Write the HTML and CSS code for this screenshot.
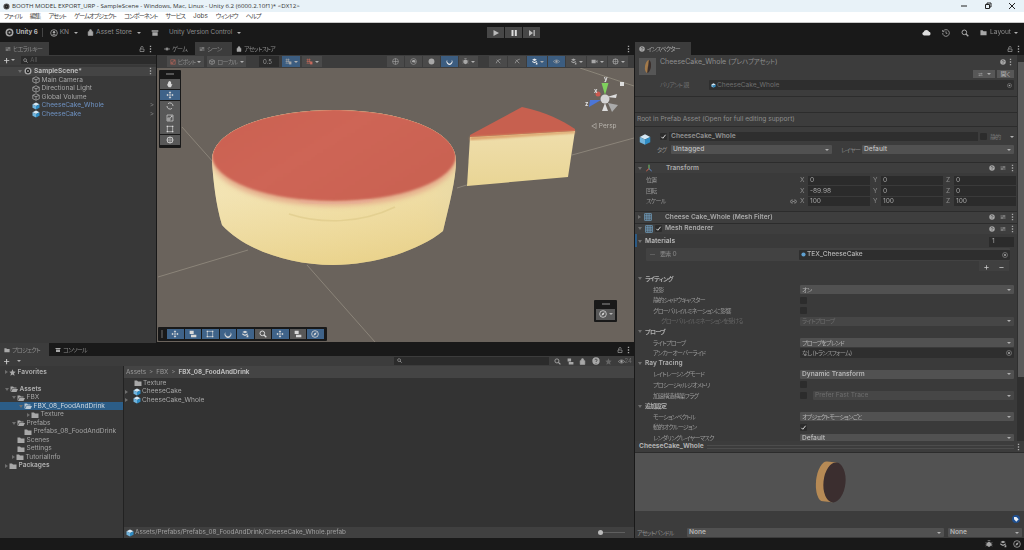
FILE: index.html
```html
<!DOCTYPE html>
<html lang="ja">

<head>
  <meta charset="UTF-8">
  <title>BOOTH MODEL EXPORT_URP - SampleScene - Unity 6.2</title>
  <link rel="stylesheet" href="styles.css">
</head>

<body>
  <svg class="defs" aria-hidden="true">
    <symbol id="i-box" viewBox="0 0 16 16"><path d="M8 1.5 14.5 4.5V11.5L8 14.5 1.5 11.5V4.5ZM1.5 4.5 8 7.5 14.5 4.5M8 7.5V14.5" fill="none" stroke="currentColor" stroke-width="1.5"/></symbol>
    <symbol id="i-prefab" viewBox="0 0 16 16"><path d="M8 1 15 4.5 8 8 1 4.5Z" fill="#d5e8f5"/><path d="M1 4.5 8 8V15L1 11.5Z" fill="#72b4dc"/><path d="M15 4.5 8 8V15L15 11.5Z" fill="#2f8cc4"/></symbol>
    <symbol id="i-folder" viewBox="0 0 16 16"><path d="M1 3H6L8 5H15V14H1Z" fill="currentColor"/></symbol>
    <symbol id="i-open" viewBox="0 0 16 16"><path d="M1 3H6L8 5H13V7H4L1 14Z" fill="currentColor"/><path d="M5 8H16L13 14H2Z" fill="currentColor"/></symbol>
    <symbol id="i-unity" viewBox="0 0 16 16"><circle cx="8" cy="8" r="7" fill="currentColor"/><path d="M8 3 12 5.5V10.500L8 13 4 10.500V5.500Z" fill="#222"/><circle cx="8" cy="8" r="1.800" fill="currentColor"/></symbol>
    <symbol id="i-dots" viewBox="0 0 4 12"><path d="M1 1h2v2H1zM1 5h2v2H1zM1 9h2v2H1z" fill="currentColor"/></symbol>
    <symbol id="i-lock" viewBox="0 0 12 12"><path d="M2 6h8v5H2zM3.500 6V3.500a2.500 2.500 0 0 1 5 0" fill="none" stroke="currentColor" stroke-width="1.300"/></symbol>
    <symbol id="i-help" viewBox="0 0 12 12"><circle cx="6" cy="6" r="5.500" fill="currentColor"/><path d="M4.300 4.700a1.700 1.600 0 1 1 2.500 1.500c-.6.300-.8.500-.8 1.300M6 9v1" fill="none" stroke="#3c3c3c" stroke-width="1.300"/></symbol>
    <symbol id="i-sliders" viewBox="0 0 12 12"><path d="M1 4h10M1 8h10M8 2v4M4 6v4" fill="none" stroke="currentColor" stroke-width="1.300"/></symbol>
    <symbol id="i-search" viewBox="0 0 12 12"><circle cx="5" cy="5" r="3.500" fill="none" stroke="currentColor" stroke-width="1.500"/><path d="M7.500 7.500 11 11" stroke="currentColor" stroke-width="2"/></symbol>
    <symbol id="i-target" viewBox="0 0 12 12"><circle cx="6" cy="6" r="5" fill="none" stroke="currentColor"/><circle cx="6" cy="6" r="2" fill="currentColor"/></symbol>
    <symbol id="i-hand" viewBox="0 0 12 12"><path d="M3 6V3.500h1V6V2h1.200v4V1.500h1.200V6V2.500h1.200V7l1-1.500 1 .6L7.500 11H4L2 8V5.500h1Z" fill="currentColor"/></symbol>
    <symbol id="i-move" viewBox="0 0 12 12"><path d="M6 .5 8 3H4ZM6 11.500 4 9H8ZM.5 6 3 4V8ZM11.500 6 9 8V4ZM5.500 3h1v6h-1ZM3 5.500h6v1H3Z" fill="currentColor"/></symbol>
    <symbol id="i-rotate" viewBox="0 0 12 12"><path d="M3 2.500A4.500 4.500 0 0 1 10.500 6M9 9.500A4.500 4.500 0 0 1 1.500 6" fill="none" stroke="currentColor" stroke-width="1.200"/></symbol>
    <symbol id="i-scale" viewBox="0 0 12 12"><path d="M1.500 1.500h9v9h-9Z" fill="none" stroke="currentColor"/><path d="M3 9h3V6H3ZM6 6l3-3M7 3h2v2" fill="none" stroke="currentColor"/></symbol>
    <symbol id="i-rect" viewBox="0 0 12 12"><path d="M2 2h8v8H2Z" fill="none" stroke="currentColor"/><path d="M1 1h2v2H1zM9 1h2v2H9zM1 9h2v2H1zM9 9h2v2H9z" fill="currentColor"/></symbol>
    <symbol id="i-combo" viewBox="0 0 12 12"><circle cx="6" cy="6" r="4.500" fill="none" stroke="currentColor"/><path d="M6 1V11M1 6H11M2.500 2.500h7v7h-7Z" fill="none" stroke="currentColor" stroke-width=".8"/></symbol>
    <symbol id="i-grid" viewBox="0 0 12 12"><circle cx="6" cy="6" r="5" fill="none" stroke="currentColor"/><path d="M6 1V11M1 6H11" stroke="currentColor"/></symbol>
    <symbol id="i-half" viewBox="0 0 12 12"><circle cx="6" cy="6" r="5" fill="none" stroke="currentColor"/><path d="M3 7A3.500 3.500 0 0 1 9.500 5L9 8Z" fill="currentColor"/></symbol>
    <symbol id="i-ball" viewBox="0 0 12 12"><circle cx="6" cy="6" r="5" fill="currentColor"/></symbol>
    <symbol id="i-ring" viewBox="0 0 12 12"><path d="M2.500 3A5 5 0 1 0 9.500 3 4 4.500 0 1 1 2.500 3Z" fill="currentColor"/></symbol>
    <symbol id="i-bug" viewBox="0 0 12 12"><ellipse cx="6" cy="6.500" rx="3.200" ry="4" fill="currentColor"/><path d="M1 4 11 9M11 4 1 9M1 6.500H11M4 1 8 1" stroke="currentColor"/></symbol>
    <symbol id="i-x-light" viewBox="0 0 12 12"><path d="M2 9c2-5 4-6 8-7M3 3l6 6" fill="none" stroke="currentColor" stroke-width="1.200"/></symbol>
    <symbol id="i-layers" viewBox="0 0 12 12"><path d="M6 1 10 3 6 5 2 3ZM2 5l4 2 4-2v2L6 9 2 7ZM9 8h2v3H8" fill="currentColor"/></symbol>
    <symbol id="i-eye" viewBox="0 0 12 12"><path d="M.5 6Q6 .5 11.500 6 6 11.500.5 6Z" fill="none" stroke="currentColor"/><circle cx="6" cy="6" r="2" fill="currentColor"/></symbol>
    <symbol id="i-cam" viewBox="0 0 12 12"><path d="M1 3h7v6H1ZM9 5l2-1.500v5L9 7Z" fill="currentColor"/></symbol>
    <symbol id="i-snap" viewBox="0 0 12 12"><path d="M1 3h7M1 6h7M1 9h7M3 1v7M6 1v7" stroke="currentColor"/><path d="M7 6h4v5H7Z" fill="currentColor"/></symbol>
    <symbol id="i-bag" viewBox="0 0 12 12"><path d="M2 4.500h8V11H2ZM4 4.500V3a2 2 0 0 1 4 0v1.500" fill="currentColor" stroke="currentColor"/></symbol>
    <symbol id="i-user" viewBox="0 0 12 12"><circle cx="6" cy="6" r="5" fill="none" stroke="currentColor" stroke-width="1.200"/><circle cx="6" cy="4.800" r="1.800" fill="currentColor"/><path d="M2.800 9.500c1-2 5.400-2 6.400 0" fill="currentColor"/></symbol>
    <symbol id="i-store" viewBox="0 0 12 12"><path d="M1 2h10v2H1ZM2 5h8v5H2Z" fill="currentColor"/></symbol>
    <symbol id="i-cloud" viewBox="0 0 14 10"><path d="M3 9.500a2.700 2.700 0 0 1-.5-5.300A4.500 4.500 0 0 1 11 4a2.800 2.800 0 0 1 0 5.500Z" fill="currentColor"/></symbol>
    <symbol id="i-history" viewBox="0 0 12 12"><path d="M2 3A5 5 0 1 1 1 6M1 1.500V4H3.500M6 3.500V6.500H8" fill="none" stroke="currentColor" stroke-width="1.200"/></symbol>
    <symbol id="i-mesh" viewBox="0 0 12 12"><path d="M1 1h10v10H1ZM1 4.300h10M1 7.600h10M4.300 1v10M7.600 1v10" fill="none" stroke="#7fb7de"/></symbol>
    <symbol id="i-axes" viewBox="0 0 12 12"><path d="M6 1V7" stroke="#7bc66b" stroke-width="1.500"/><path d="M6 7 2 10.500" stroke="#d9654f" stroke-width="1.500"/><path d="M6 7 10 10.500" stroke="#5d8fd6" stroke-width="1.500"/></symbol>
    <symbol id="i-tag" viewBox="0 0 12 12"><circle cx="6" cy="6" r="6" fill="#1f4f8f"/><path d="M3 3h3.500L10 6.500 6.500 10 3 6.500Z" fill="#e8eef5"/></symbol>
    <symbol id="i-star" viewBox="0 0 12 12"><path d="M6 .5 7.700 4.300 11.500 4.700 8.600 7.300 9.500 11.500 6 9.300 2.500 11.500 3.400 7.300.5 4.700 4.300 4.300Z" fill="currentColor"/></symbol>
    <symbol id="i-check" viewBox="0 0 10 10"><path d="M2 5.500 4 7.500 8 2.500" fill="none" stroke="currentColor" stroke-width="1.400"/></symbol>
    <symbol id="i-tool" viewBox="0 0 12 12"><path d="M1 1h6v5H1ZM3 7h8v4H3Z" fill="currentColor"/></symbol>
    <symbol id="i-compass" viewBox="0 0 12 12"><circle cx="6" cy="6" r="5" fill="none" stroke="currentColor" stroke-width="1.200"/><path d="M8.500 3.500 7 7 3.500 8.500 5 5Z" fill="currentColor"/></symbol>
    <symbol id="i-link" viewBox="0 0 12 12"><path d="M5 3.500H3.500a2.500 2.500 0 0 0 0 5H5M7 3.500h1.500a2.500 2.500 0 0 1 0 5H7M4 6h4" fill="none" stroke="currentColor" stroke-width="1.200"/></symbol>
  </svg>

  <header class="titlebar">
    <svg class="ic title-icon"><use href="#i-unity"/></svg>
    <span>BOOTH MODEL EXPORT_URP - SampleScene - Windows, Mac, Linux - Unity 6.2 (6000.2.10f1)* &lt;DX12&gt;</span>
    <div class="winbtns">
      <svg width="8" height="8" viewBox="0 0 8 8"><path d="M1 4H7" stroke="#222"/></svg>
      <svg width="8" height="8" viewBox="0 0 8 8"><path d="M1.500 2.500h4v4h-4ZM3 2.500V1h4v4H5.500" fill="none" stroke="#222"/></svg>
      <svg width="8" height="8" viewBox="0 0 8 8"><path d="M1 1 7 7M7 1 1 7" stroke="#222"/></svg>
    </div>
  </header>

  <nav class="menubar">
    <span class="jp">ファイル</span><span class="jp">編集</span><span class="jp">アセット</span><span class="jp">ゲームオブジェクト</span><span class="jp">コンポーネント</span><span class="jp">サービス</span><span>Jobs</span><span class="jp">ウィンドウ</span><span class="jp">ヘルプ</span>
  </nav>

  <div class="toolbar">
    <svg class="ic ic9 mr2"><use href="#i-unity"/></svg><b class="unity">Unity 6</b>
    <i class="vline"></i>
    <svg class="ic ic8 mr2"><use href="#i-user"/></svg><span>KN</span><i class="caret ml5"></i>
    <svg class="ic ic7 ml9 mr2"><use href="#i-bag"/></svg><span>Asset Store</span><i class="caret ml5"></i>
    <svg class="ic ic8 ml10"><use href="#i-store"/></svg>
    <span class="uvc">Unity Version Control</span><i class="caret ml5"></i>
    <div class="play">
      <button><svg width="8" height="8" viewBox="0 0 8 8"><path d="M1.500 1 7 4 1.500 7Z" fill="#bbb"/></svg></button>
      <button><svg width="8" height="8" viewBox="0 0 8 8"><path d="M1.500 1h2v6h-2ZM4.800 1h2v6h-2Z" fill="#ddd"/></svg></button>
      <button><svg width="8" height="8" viewBox="0 0 8 8"><path d="M1 1 5 4 1 7ZM5.500 1h1.300v6H5.500Z" fill="#bbb"/></svg></button>
    </div>
    <div class="toolbar-right">
      <svg class="ic cloud"><use href="#i-cloud"/></svg>
      <svg class="ic ic8"><use href="#i-history"/></svg>
      <svg class="ic ic8"><use href="#i-search"/></svg>
      <div class="layout"><svg class="ic ic7"><use href="#i-folder"/></svg><span>Layout</span><i class="caret"></i></div>
    </div>
  </div>

  <main class="workspace">
    <div class="left">
      <div class="top-row">
        <section class="hierarchy">
          <div class="tabs">
            <div class="tab active tab-hier"><svg class="ic ic6"><use href="#i-sliders"/></svg><span class="jp">ヒエラルキー</span></div>
            <div class="tab-tools"><svg class="ic ic6"><use href="#i-lock"/></svg><svg class="ic dots"><use href="#i-dots"/></svg></div>
          </div>
          <div class="hier-bar">
            <span class="plus">+</span><i class="caret"></i>
            <div class="hier-search"><svg class="ic ic5"><use href="#i-search"/></svg>All</div>
          </div>
          <div class="hier-list">
            <div class="hier-scene"><i class="tri-d"></i><svg class="ic ic8"><use href="#i-unity"/></svg><b>SampleScene*</b><svg class="ic dots push"><use href="#i-dots"/></svg></div>
            <div class="hier-row"><svg class="ic ic8"><use href="#i-box"/></svg>Main Camera</div>
            <div class="hier-row"><svg class="ic ic8"><use href="#i-box"/></svg>Directional Light</div>
            <div class="hier-row"><svg class="ic ic8"><use href="#i-box"/></svg>Global Volume</div>
            <div class="hier-row prefab"><svg class="ic ic8"><use href="#i-prefab"/></svg>CheeseCake_Whole<span class="chev">&gt;</span></div>
            <div class="hier-row prefab"><svg class="ic ic8"><use href="#i-prefab"/></svg>CheeseCake<span class="chev">&gt;</span></div>
          </div>
        </section>

        <section class="scene">
          <div class="tabs">
            <div class="tab tab-game"><svg class="ic ic6"><use href="#i-eye"/></svg><span class="jp">ゲーム</span></div>
            <div class="tab active tab-scene"><svg class="ic ic6"><use href="#i-sliders"/></svg><span class="jp">シーン</span></div>
            <div class="tab tab-store"><svg class="ic ic6"><use href="#i-bag"/></svg><span class="jp">アセットストア</span></div>
            <div class="tab-tools"><svg class="ic dots"><use href="#i-dots"/></svg></div>
          </div>
          <div class="scene-bar">
            <div class="sbtn pivot"><svg class="ic ic6 red"><use href="#i-scale"/></svg><span class="jp">ピボット</span><i class="caret"></i></div>
            <div class="sbtn local"><svg class="ic ic6"><use href="#i-box"/></svg><span class="jp">ローカル</span><i class="caret"></i></div>
            <div class="snap-val">0.5</div>
            <div class="sbtn blue snap1"><svg class="ic ic7"><use href="#i-snap"/></svg><i class="caret"></i></div>
            <div class="sbtn snap2"><svg class="ic ic7 red"><use href="#i-snap"/></svg><i class="caret"></i></div>
            <div class="bar-group group-a">
              <div class="sbtn w17"><svg class="ic ic7"><use href="#i-grid"/></svg></div>
              <div class="sbtn w17"><svg class="ic ic7"><use href="#i-half"/></svg></div>
              <div class="sbtn w17"><svg class="ic ic7"><use href="#i-ball"/></svg></div>
              <div class="sbtn w17 blue"><svg class="ic ic7 white"><use href="#i-ring"/></svg></div>
              <div class="sbtn w19"><svg class="ic ic7"><use href="#i-bug"/></svg><i class="caret"></i></div>
            </div>
            <div class="bar-group group-b">
              <div class="sbtn w18"><svg class="ic ic7"><use href="#i-x-light"/></svg></div>
              <div class="sbtn w18"><svg class="ic ic7"><use href="#i-x-light"/></svg></div>
              <div class="sbtn w20 blue"><svg class="ic ic7 white"><use href="#i-layers"/></svg><i class="caret"></i></div>
              <div class="sbtn w17 blue"><svg class="ic ic7"><use href="#i-eye"/></svg></div>
              <div class="sbtn w20"><svg class="ic ic7"><use href="#i-layers"/></svg><i class="caret"></i></div>
              <div class="sbtn w20"><svg class="ic ic7"><use href="#i-cam"/></svg><i class="caret"></i></div>
              <div class="sbtn w20"><svg class="ic ic7"><use href="#i-combo"/></svg><i class="caret"></i></div>
            </div>
          </div>
          <div class="viewport">
            <svg class="scene-art" viewBox="157 68 477 274" width="477" height="274">
              <defs>
                <linearGradient id="side" x1="0" x2="1" y1="0" y2="0">
                  <stop offset="0" stop-color="#f0e1af"/>
                  <stop offset=".5" stop-color="#eedb9d"/>
                  <stop offset=".85" stop-color="#e9d38f"/>
                  <stop offset="1" stop-color="#dccb92"/>
                </linearGradient>
                <linearGradient id="side-shade" x1="0" x2="0" y1="0" y2="1">
                  <stop offset=".55" stop-color="#f5e6b8" stop-opacity=".5"/>
                  <stop offset="1" stop-color="#e6cc7e" stop-opacity=".6"/>
                </linearGradient>
                <linearGradient id="top" x1="0" x2="1" y1="0" y2=".6">
                  <stop offset="0" stop-color="#cb6151"/>
                  <stop offset=".5" stop-color="#ce6556"/>
                  <stop offset="1" stop-color="#ca6252"/>
                </linearGradient>
                <linearGradient id="slice-side" x1="0" x2="0" y1="0" y2="1">
                  <stop offset="0" stop-color="#efdeac"/>
                  <stop offset="1" stop-color="#e9d595"/>
                </linearGradient>
                <filter id="soft" x="-5%" y="-5%" width="110%" height="110%" color-interpolation-filters="sRGB"><feGaussianBlur stdDeviation="1"/></filter>
                <filter id="softer" x="-10%" y="-10%" width="120%" height="120%" color-interpolation-filters="sRGB"><feGaussianBlur stdDeviation="2.500"/></filter>
                <clipPath id="cake-clip"><path d="M212 160C213 180 216 205 222 225C245 250 290 265 333 265C375 265 420 250 443 231C449 205 456 180 456 160C456 130 400 110 334 110C268 110 212 130 212 160Z"/></clipPath>
              </defs>
              <path d="M182 127 214 163M158 277 248 250M307 265 375 342M457 188 470 184M572 155 634 138M580 68 634 86" stroke="#8b8479" fill="none"/>
              <g clip-path="url(#cake-clip)">
                <rect x="205" y="105" width="258" height="165" fill="url(#side)"/>
                <rect x="205" y="105" width="258" height="165" fill="url(#side-shade)"/>
                <path d="M289 214C320 224 360 224 395 207" fill="none" stroke="#dcc887" stroke-width="1.500" opacity=".6"/>
                <ellipse cx="334" cy="160" rx="122" ry="46" fill="#e5ad8c" filter="url(#softer)"/>
                <ellipse cx="334" cy="155" rx="122" ry="46" fill="url(#top)" filter="url(#soft)"/>
                <path d="M300 201C320 204 350 204 372 200" fill="none" stroke="#e8a898" stroke-width="1.500" filter="url(#soft)"/>
              </g>
              <path d="M470 137 575 131 568 177 467 186Z" fill="url(#slice-side)"/>
              <path d="M470 135 522 107C545 112 562 120 575 129L575 131 470 137Z" fill="#c7604f"/>
              <path d="M470 137 575 131 575 133 470 140Z" fill="#d99a63" filter="url(#soft)"/>
              <g transform="translate(605 99)">
                <path d="M-3.500 -16H3.500L0 -4Z" fill="#7fd15d"/>
                <path d="M-16 8-15 1-4 1Z" fill="#4b76d8"/>
                <circle cx="-7" cy="-5" r="2.500" fill="#cc5a50"/>
                <path d="M12-5 11-1 2-2Z" fill="#ddd"/>
                <path d="M-3 12 3 12 0 4Z" fill="#ddd"/>
                <path d="M3 4 13 6 7 13Z" fill="#aaa"/>
                <circle cx="0" cy="0" r="4.500" fill="#d4d4d4"/>
              </g>
              <path d="M620 82h4v4h-4Z" fill="#ddd"/>
            </svg>
            <span class="giz giz-y">y</span><span class="giz giz-x">x</span><span class="giz giz-z">z</span>
            <span class="persp">◁ Persp</span>

            <div class="overlay tools">
              <i class="grip"></i>
              <div class="obtn"><svg class="ic ic8"><use href="#i-hand"/></svg></div>
              <div class="obtn blue"><svg class="ic ic8"><use href="#i-move"/></svg></div>
              <div class="obtn"><svg class="ic ic8"><use href="#i-rotate"/></svg></div>
              <div class="obtn"><svg class="ic ic8"><use href="#i-scale"/></svg></div>
              <div class="obtn"><svg class="ic ic8"><use href="#i-rect"/></svg></div>
              <div class="obtn"><svg class="ic ic8"><use href="#i-combo"/></svg></div>
            </div>

            <div class="overlay cam-mode">
              <i class="grip"></i>
              <div class="obtn"><svg class="ic ic8"><use href="#i-compass"/></svg><i class="caret"></i></div>
            </div>

            <div class="overlay dock">
              <i class="dock-grip"></i>
              <div class="obtn blue"><svg class="ic ic8"><use href="#i-move"/></svg></div>
              <div class="obtn blue"><svg class="ic ic8"><use href="#i-tool"/></svg></div>
              <div class="obtn blue"><svg class="ic ic8"><use href="#i-rect"/></svg></div>
              <div class="obtn blue"><svg class="ic ic8"><use href="#i-ring"/></svg></div>
              <div class="obtn blue"><svg class="ic ic8"><use href="#i-layers"/></svg></div>
              <div class="obtn"><svg class="ic ic8"><use href="#i-search"/></svg></div>
              <div class="obtn blue"><svg class="ic ic8"><use href="#i-move"/></svg></div>
              <div class="obtn"><svg class="ic ic8"><use href="#i-tool"/></svg></div>
              <div class="obtn blue"><svg class="ic ic8"><use href="#i-compass"/></svg></div>
            </div>
          </div>
        </section>
      </div>

      <section class="project">
        <div class="tabs">
          <div class="tab active tab-proj"><svg class="ic ic6"><use href="#i-folder"/></svg><span class="jp">プロジェクト</span></div>
          <div class="tab tab-console"><svg class="ic ic6"><use href="#i-store"/></svg><span class="jp">コンソール</span></div>
          <div class="tab-tools"><svg class="ic ic6"><use href="#i-lock"/></svg><svg class="ic dots"><use href="#i-dots"/></svg></div>
        </div>
        <div class="proj-bar">
          <span class="plus">+</span><i class="caret"></i>
          <div class="proj-search"><svg class="ic ic5"><use href="#i-search"/></svg></div>
          <svg class="ic ic7"><use href="#i-search"/></svg>
          <svg class="ic ic7"><use href="#i-tool"/></svg>
          <svg class="ic ic7"><use href="#i-bag"/></svg>
          <svg class="ic ic8"><use href="#i-help"/></svg>
          <svg class="ic ic7 dim"><use href="#i-star"/></svg>
          <span class="count"><svg class="ic ic7"><use href="#i-eye"/></svg>24</span>
        </div>
        <div class="proj-body">
          <div class="tree">
            <div class="node l0 strong"><i class="tri-r"></i><svg class="ic ic7"><use href="#i-star"/></svg>Favorites</div>
            <div class="node"></div>
            <div class="node l0 strong"><i class="tri-d"></i><svg class="ic ic8"><use href="#i-open"/></svg>Assets</div>
            <div class="node l1"><i class="tri-d"></i><svg class="ic ic8"><use href="#i-open"/></svg>FBX</div>
            <div class="node l2 sel"><i class="tri-d"></i><svg class="ic ic8"><use href="#i-open"/></svg>FBX_08_FoodAndDrink</div>
            <div class="node l3"><i class="tri-r"></i><svg class="ic ic8"><use href="#i-folder"/></svg>Texture</div>
            <div class="node l1"><i class="tri-d"></i><svg class="ic ic8"><use href="#i-open"/></svg>Prefabs</div>
            <div class="node l2"><i class="tri-none"></i><svg class="ic ic8"><use href="#i-folder"/></svg>Prefabs_08_FoodAndDrink</div>
            <div class="node l1"><i class="tri-none"></i><svg class="ic ic8"><use href="#i-folder"/></svg>Scenes</div>
            <div class="node l1"><i class="tri-none"></i><svg class="ic ic8"><use href="#i-folder"/></svg>Settings</div>
            <div class="node l1"><i class="tri-r"></i><svg class="ic ic8"><use href="#i-folder"/></svg>TutorialInfo</div>
            <div class="node l0 strong"><i class="tri-r"></i><svg class="ic ic8"><use href="#i-folder"/></svg>Packages</div>
          </div>
          <div class="files">
            <div class="crumbs">Assets<span>&gt;</span>FBX<span>&gt;</span><b>FBX_08_FoodAndDrink</b></div>
            <div class="file-list">
              <div class="file"><i class="tri-none"></i><svg class="ic ic8"><use href="#i-folder"/></svg>Texture</div>
              <div class="file"><i class="tri-r"></i><svg class="ic ic8"><use href="#i-prefab"/></svg>CheeseCake</div>
              <div class="file"><i class="tri-r"></i><svg class="ic ic8"><use href="#i-prefab"/></svg>CheeseCake_Whole</div>
            </div>
            <div class="pathbar">
              <svg class="ic ic8"><use href="#i-prefab"/></svg>Assets/Prefabs/Prefabs_08_FoodAndDrink/CheeseCake_Whole.prefab
              <div class="slider"><i></i></div>
            </div>
          </div>
        </div>
      </section>
    </div>

    <aside class="inspector">
      <div class="tabs">
        <div class="tab active tab-insp"><svg class="ic ic6"><use href="#i-help"/></svg><span class="jp">インスペクター</span></div>
        <div class="tab-tools"><svg class="ic ic6"><use href="#i-lock"/></svg><svg class="ic dots"><use href="#i-dots"/></svg></div>
      </div>
      <div class="insp-scroll">
        <div class="insp-content">
          <div class="asset-head">
            <div class="asset-thumb"><i></i></div>
            <div class="asset-info">
              <div class="asset-title"><span>CheeseCake_Whole (<span class="jp">プレハブアセット</span>)</span><svg class="ic ic6 push"><use href="#i-help"/></svg><svg class="ic dots"><use href="#i-dots"/></svg></div>
              <div class="asset-btns"><span class="mini"><svg class="ic ic5"><use href="#i-sliders"/></svg><i class="caret"></i></span><span class="mini open">開く</span></div>
              <div class="asset-variant"><span class="jp">バリアント 親</span><div class="field"><svg class="ic ic5"><use href="#i-prefab"/></svg>CheeseCake_Whole<svg class="ic ic5 push"><use href="#i-target"/></svg></div></div>
            </div>
          </div>
          <div class="band"></div>
          <div class="root-note">Root in Prefab Asset (Open for full editing support)</div>

          <div class="object">
            <svg class="ic obj-icon"><use href="#i-prefab"/></svg>
            <div class="obj-rows">
              <div class="obj-name">
                <span class="check on"><svg class="ic"><use href="#i-check"/></svg></span>
                <div class="name-field">CheeseCake_Whole</div>
                <span class="check"></span><span class="static jp">静的</span><i class="caret push"></i>
              </div>
              <div class="obj-tags">
                <span class="tag-label jp">タグ</span><div class="drop tag-drop">Untagged<i class="caret"></i></div>
                <span class="layer-label jp">レイヤー</span><div class="drop">Default<i class="caret"></i></div>
              </div>
            </div>
          </div>

          <div class="comp"><i class="tri-d"></i><svg class="ic ic8"><use href="#i-axes"/></svg><b class="comp-name">Transform</b><div class="comp-tools"><svg class="ic ic6"><use href="#i-help"/></svg><svg class="ic ic6"><use href="#i-sliders"/></svg><svg class="ic dots"><use href="#i-dots"/></svg></div></div>
          <div class="xform">
            <div class="xrow"><span class="xlabel jp">位置</span><span class="ax">X</span><span class="num">0</span><span class="ax">Y</span><span class="num">0</span><span class="ax">Z</span><span class="num">0</span></div>
            <div class="xrow"><span class="xlabel jp">回転</span><span class="ax">X</span><span class="num">-89.98</span><span class="ax">Y</span><span class="num">0</span><span class="ax">Z</span><span class="num">0</span></div>
            <div class="xrow"><span class="xlabel jp">スケール<svg class="ic ic7 push"><use href="#i-link"/></svg></span><span class="ax">X</span><span class="num">100</span><span class="ax">Y</span><span class="num">100</span><span class="ax">Z</span><span class="num">100</span></div>
          </div>
          <div class="comp tall"><i class="tri-r"></i><svg class="ic ic8"><use href="#i-mesh"/></svg><b class="comp-name">Cheese Cake_Whole (Mesh Filter)</b><div class="comp-tools"><svg class="ic ic6"><use href="#i-help"/></svg><svg class="ic ic6"><use href="#i-sliders"/></svg><svg class="ic dots"><use href="#i-dots"/></svg></div></div>
          <div class="comp tall"><i class="tri-d"></i><svg class="ic ic8"><use href="#i-mesh"/></svg><span class="check on"><svg class="ic"><use href="#i-check"/></svg></span><b class="comp-name close">Mesh Renderer</b><div class="comp-tools"><svg class="ic ic6"><use href="#i-help"/></svg><svg class="ic ic6"><use href="#i-sliders"/></svg><svg class="ic dots"><use href="#i-dots"/></svg></div></div>

          <div class="materials"><i class="tri-d"></i><b>Materials</b><span class="count-field">1</span></div>
          <div class="element"><i class="drag"></i><span class="el-label"><span class="jp">要素</span> 0</span><div class="field mat-field"><svg class="ic ic5"><use href="#i-ball"/></svg>TEX_CheeseCake<svg class="ic ic6 push"><use href="#i-target"/></svg></div></div>
          <div class="plusminus"><div><span>+</span><span>−</span></div></div>

          <div class="section"><i class="tri-d"></i><b class="jp">ライティング</b></div>
          <div class="prop"><span class="jp">投影</span><div class="drop"><span class="jp">オン</span><i class="caret"></i></div></div>
          <div class="prop"><span class="jp">静的シャドウキャスター</span><span class="check"></span></div>
          <div class="prop"><span class="jp">グローバルイルミネーションに影響</span><span class="check"></span></div>
          <div class="prop off sub"><span class="jp">グローバルイルミネーションを受ける</span><div class="drop"><span class="jp">ライトプローブ</span><i class="caret"></i></div></div>
          <div class="section"><i class="tri-d"></i><b class="jp">プローブ</b></div>
          <div class="prop"><span class="jp">ライトプローブ</span><div class="drop"><span class="jp">プローブをブレンド</span><i class="caret"></i></div></div>
          <div class="prop"><span class="jp">アンカーオーバーライド</span><div class="field"><span class="jp">なし (トランスフォーム)</span><svg class="ic ic6 push"><use href="#i-target"/></svg></div></div>
          <div class="section"><i class="tri-d"></i><b>Ray Tracing</b></div>
          <div class="prop"><span class="jp">レイトレーシングモード</span><div class="drop bold">Dynamic Transform<i class="caret"></i></div></div>
          <div class="prop"><span class="jp">プロシージャルジオメトリ</span><span class="check"></span></div>
          <div class="prop"><span class="jp">加速構造構築フラグ</span><div class="flagged"><span class="check"></span><div class="drop dimmed">Prefer Fast Trace<i class="caret"></i></div></div></div>
          <div class="section"><i class="tri-d"></i><b class="jp">追加設定</b></div>
          <div class="prop"><span class="jp">モーションベクトル</span><div class="drop"><span class="jp">オブジェクトモーションごと</span><i class="caret"></i></div></div>
          <div class="prop"><span class="jp">動的オクルージョン</span><span class="check on"><svg class="ic"><use href="#i-check"/></svg></span></div>
          <div class="prop"><span class="jp">レンダリングレイヤーマスク</span><div class="drop bold">Default<i class="caret"></i></div></div>
        </div>
        <div class="scrollbar"><i></i></div>
      </div>

      <div class="preview-head"><b>CheeseCake_Whole</b><span class="rule"></span><svg class="ic dots"><use href="#i-dots"/></svg></div>
      <div class="preview">
        <svg width="40" height="46" viewBox="0 0 40 46">
          <g transform="rotate(6 20 23)">
            <path d="M15 3A9 20 0 0 0 15 43H24.500V3Z" fill="#b68a55"/>
            <ellipse cx="24.500" cy="23" rx="11" ry="20" fill="#3b2e2f"/>
          </g>
        </svg>
      </div>
      <div class="bundle-gap"><svg class="ic ic8"><use href="#i-tag"/></svg></div>
      <div class="bundle"><span class="jp">アセットバンドル</span><div class="drop main-drop bold">None<i class="caret"></i></div><div class="drop side-drop bold">None<i class="caret"></i></div></div>
    </aside>
  </main>

  <footer class="statusbar">
    <svg class="ic ic8"><use href="#i-bug"/></svg>
    <svg class="ic ic8"><use href="#i-layers"/></svg>
    <svg class="ic ic8"><use href="#i-compass"/></svg>
  </footer>
</body>

</html>
```

FILE: styles.css
```css
* {
  box-sizing: border-box;
}

html,
body {
  margin: 0;
  height: 100%;
}

body {
  width: 1024px;
  height: 550px;
  overflow: hidden;
  display: flex;
  flex-direction: column;
  background: #191919;
  color: #a8a8a8;
  font-family: Inter, "Noto Sans CJK JP", sans-serif;
  font-size: 6.6px;
  font-feature-settings: "palt";
  line-height: 1;
  white-space: nowrap;
  filter: blur(.35px);
}

i {
  display: block;
  font-style: normal;
}

/* kana in the reference is set much tighter than Noto gives by default */
.jp {
  font-size: 6px;
  letter-spacing: -.7px;
}

.defs {
  position: absolute;
  width: 0;
  height: 0;
}

.ic {
  display: block;
  flex: none;
  width: 8px;
  height: 8px;
  color: #a8a8a8;
}

.ic5 { width: 5px; height: 5px; }
.ic6 { width: 6px; height: 6px; }
.ic7 { width: 7px; height: 7px; }
.ic8 { width: 8px; height: 8px; }
.ic9 { width: 9px; height: 9px; }
.red { color: #c96a5c; }
.white { color: #eee; }
.dim { color: #666; }
.mr2 { margin-right: 2px; }
.ml5 { margin-left: 5px; }
.ml9 { margin-left: 9px; }
.ml10 { margin-left: 10px; }
.push { margin-left: auto; }

.dots {
  width: 3px;
  height: 8px;
}

.caret {
  flex: none;
  width: 0;
  height: 0;
  border: 2px solid transparent;
  border-top: 2.5px solid #b0b0b0;
  border-bottom: 0;
}

.tri-d,
.tri-r,
.tri-none {
  flex: none;
  width: 0;
  height: 0;
  border-style: solid;
  border-color: transparent;
}

.tri-d {
  border-width: 3px 2px 0;
  border-top-color: #6f6f6f;
}

.tri-r {
  border-width: 2px 0 2px 3px;
  border-left-color: #6f6f6f;
}

.tri-none {
  border-width: 0 2px;
}

/* window chrome */
.titlebar {
  flex: none;
  height: 12px;
  display: flex;
  align-items: center;
  padding-left: 3px;
  background: #e8f2f8;
  color: #333;
  font-family: "Open Sans", "Noto Sans CJK JP", sans-serif;
  font-size: 6.15px;
}

.title-icon {
  width: 7px;
  height: 7px;
  margin-right: 2px;
  color: #555;
}

.winbtns {
  margin-left: auto;
  display: flex;
  gap: 16px;
  padding-right: 8px;
}

.menubar {
  flex: none;
  height: 11px;
  display: flex;
  align-items: center;
  gap: 8px;
  padding: 0 0 1px 4px;
  background: #fff;
  border-bottom: 1px solid #c9c9c9;
  color: #444;
  font-size: 6.4px;
}

.menubar .jp {
  font-size: 6.2px;
  letter-spacing: -.9px;
}

.toolbar {
  flex: none;
  height: 19px;
  display: flex;
  align-items: center;
  padding-left: 5px;
  background: #191919;
  color: #8f8f8f;
  font-size: 6.6px;
}

.unity {
  color: #b9b9b9;
  font-size: 6.2px;
}

.vline {
  width: 1px;
  height: 9px;
  margin: 0 7px 0 4px;
  background: #444;
}

.uvc {
  margin-left: 10px;
  font-size: 6.3px;
}

.play {
  position: absolute;
  left: 487px;
  top: 27px;
  display: flex;
  gap: 1px;
}

.play button {
  width: 17px;
  height: 11px;
  padding: 0;
  border: 0;
  background: #474747;
  display: flex;
  align-items: center;
  justify-content: center;
}

.toolbar-right {
  margin-left: auto;
  display: flex;
  align-items: center;
  gap: 11px;
  padding-right: 6px;
}

.cloud {
  width: 9px;
  height: 7px;
  color: #ddd;
}

.layout {
  display: flex;
  align-items: center;
  gap: 3px;
}

.workspace {
  flex: none;
  height: 496px;
  display: flex;
}

.left {
  width: 634px;
  display: flex;
  flex-direction: column;
}

.top-row {
  flex: none;
  height: 301px;
  display: flex;
  gap: 1px;
}

/* tabs */
.tabs {
  flex: none;
  height: 13px;
  display: flex;
  background: #191919;
}

.tab {
  display: flex;
  align-items: center;
  gap: 2px;
  height: 13px;
  color: #8c8c8c;
}

.tab.active {
  background: #3c3c3c;
}

.tab-hier { width: 49px; padding-left: 5px; }
.tab-game { width: 34px; margin-left: 4px; padding-left: 3px; }
.tab-scene { width: 37px; padding-left: 4px; }
.tab-store { width: 50px; padding-left: 4px; }
.tab-proj { width: 49px; padding-left: 4px; }
.tab-console { width: 42px; padding-left: 6px; }
.tab-insp { width: 56px; padding-left: 4px; color: #aaa; }

.tab-tools {
  margin-left: auto;
  display: flex;
  align-items: center;
  gap: 4px;
  padding-right: 4px;
}

.plus {
  color: #d0d0d0;
  font-size: 11px;
  line-height: 9px;
  margin-right: 1px;
}

/* hierarchy */
.hierarchy {
  width: 156px;
  display: flex;
  flex-direction: column;
}

.hier-bar {
  flex: none;
  height: 10px;
  display: flex;
  align-items: center;
  padding-left: 3px;
  background: #3c3c3c;
}

.hier-search {
  flex: 1;
  height: 8px;
  margin-left: 6px;
  display: flex;
  align-items: center;
  gap: 2px;
  padding-left: 2px;
  background: #2b2b2b;
  color: #5f5f5f;
  font-size: 6px;
}

.hier-list {
  flex: 1;
  background: #383838;
  padding-top: 1.500px;
}

.hier-scene {
  height: 9.500px;
  display: flex;
  align-items: center;
  padding: 0 4px 0 18px;
  background: #444;
  color: #b8b8b8;
  gap: 2px;
}

.hier-row {
  height: 8.500px;
  display: flex;
  align-items: center;
  gap: 1.500px;
  padding-left: 32px;
  color: #a8a8a8;
}

.hier-row.prefab {
  color: #6f93c4;
}

.chev {
  margin-left: auto;
  padding-right: 2px;
  color: #777;
}

/* scene view */
.scene {
  flex: 1;
  display: flex;
  flex-direction: column;
}

.scene-bar {
  flex: none;
  height: 13px;
  display: flex;
  align-items: center;
  background: #3c3c3c;
  font-size: 6px;
  color: #8a8a8a;
}

.sbtn {
  height: 11px;
  display: flex;
  align-items: center;
  justify-content: center;
  gap: 2px;
  background: #4a4a4a;
  flex: none;
}

.sbtn.blue {
  background: #3c5d80;
}

.pivot { width: 37px; margin-left: 10px; }
.local { width: 39px; margin-left: 3px; }
.snap-val {
  width: 20px;
  height: 11px;
  margin-left: 13px;
  padding: 3px 0 0 4px;
  background: #2b2b2b;
  color: #999;
}
.snap1 { width: 18px; margin-left: 3px; }
.snap2 { width: 20px; margin-left: 2px; }
.w17 { width: 17px; }
.w18 { width: 18px; }
.w19 { width: 19px; }
.w20 { width: 20px; }

.bar-group {
  display: flex;
  gap: 1px;
}

.group-a { margin-left: 65px; }
.group-b { margin-left: 11px; }

.viewport {
  position: relative;
  flex: none;
  height: 274px;
  background: #6a635c;
  overflow: hidden;
}

.scene-art {
  display: block;
}

.giz {
  position: absolute;
  color: #e4e4e4;
  font-size: 6px;
  font-weight: 700;
}

.giz-y { left: 447px; top: 8px; }
.giz-x { left: 437px; top: 20px; }
.giz-z { left: 428px; top: 33px; }

.persp {
  position: absolute;
  left: 434px;
  top: 55px;
  color: #b9b5ae;
  font-size: 6.500px;
}

.overlay {
  position: absolute;
  background: #191919;
  border-radius: 1px;
}

.obtn {
  height: 10.500px;
  display: flex;
  align-items: center;
  justify-content: center;
  gap: 2px;
  background: #585858;
}

.obtn.blue {
  background: #3f6389;
}

.obtn .ic {
  color: #d8d8d8;
}

.grip {
  width: 8px;
  height: 2px;
  margin: 3px auto 3px;
  background: #555;
}

.tools {
  left: 2px;
  top: 2px;
  width: 22px;
  height: 78px;
  display: flex;
  flex-direction: column;
  gap: .700px;
  padding: 0 1px;
}

.cam-mode {
  left: 437px;
  top: 232px;
  width: 23px;
  height: 22px;
  padding: 0 2px;
}

.cam-mode .grip {
  margin: 3px auto 4px;
}

.dock {
  left: 1px;
  top: 259px;
  width: 169px;
  height: 14px;
  display: flex;
  align-items: center;
  padding: 0 2px 0 9px;
  gap: 1px;
}

.dock .obtn {
  width: 16.500px;
}

.dock-grip {
  position: absolute;
  left: 3px;
  top: 3px;
  width: 2px;
  height: 8px;
  background: #444;
}

/* project window */
.project {
  flex: none;
  height: 195px;
  display: flex;
  flex-direction: column;
}

.proj-bar {
  flex: none;
  height: 10px;
  display: flex;
  align-items: center;
  padding: 0 2px 0 3px;
  background: #3c3c3c;
  gap: 5.500px;
}

.proj-search {
  width: 160px;
  height: 8px;
  margin-left: 368px;
  padding: 1px 0 0 3px;
  background: #2b2b2b;
}

.count {
  display: flex;
  align-items: center;
  color: #6d6d6d;
  font-size: 6px;
}

.proj-body {
  flex: 1;
  display: flex;
  min-height: 0;
}

.tree {
  width: 124px;
  padding-top: 1.750px;
  background: #383838;
  border-right: 1px solid #222;
}

.node {
  height: 8.500px;
  display: flex;
  align-items: center;
  gap: 1.500px;
  color: #a4a4a4;
}

.node.strong {
  color: #b0b0b0;
  font-weight: 600;
}

.node.sel {
  background: #2c5d87;
  color: #cfd8e0;
}

.node.sel .ic {
  color: #b9c8d4;
}

.l0 { padding-left: 4.500px; }
.l1 { padding-left: 11.500px; }
.l2 { padding-left: 18.500px; }
.l3 { padding-left: 26.500px; }

.files {
  flex: 1;
  display: flex;
  flex-direction: column;
  background: #333;
}

.crumbs {
  flex: none;
  height: 12px;
  display: flex;
  align-items: center;
  gap: 3px;
  padding-left: 2px;
  background: #444;
  color: #999;
  font-size: 6.300px;
}

.crumbs b {
  color: #bdbdbd;
}

.file-list {
  flex: 1;
  padding-top: 1px;
}

.file {
  height: 8.500px;
  display: flex;
  align-items: center;
  gap: 1.500px;
  padding-left: 1px;
}

.file .tri-none,
.file .tri-r {
  margin-right: 3px;
}

.pathbar {
  flex: none;
  height: 11px;
  display: flex;
  align-items: center;
  gap: 1px;
  padding-left: 2px;
  background: #404040;
  color: #a0a0a0;
  font-size: 6.350px;
}

.slider {
  position: relative;
  width: 27px;
  height: 1px;
  margin-left: auto;
  margin-right: 9px;
  background: #5f5f5f;
}

.slider i {
  position: absolute;
  left: 0;
  top: -2px;
  width: 5px;
  height: 5px;
  border-radius: 50%;
  background: #bbb;
}

/* inspector */
.inspector {
  width: 389px;
  margin-left: 1px;
  display: flex;
  flex-direction: column;
}

.insp-scroll {
  flex: none;
  height: 386px;
  display: flex;
  background: #3a3a3a;
  overflow: hidden;
}

.insp-content {
  flex: none;
  width: 382px;
  overflow: hidden;
}

.scrollbar {
  flex: 1;
  padding: 7px 0 0 1px;
  background: #2f2f2f;
}

.scrollbar i {
  height: 315px;
  background: #5a5a5a;
}

.asset-head {
  height: 41px;
  display: flex;
  padding: 2px 3px 0 4px;
  background: #3c3c3c;
}

.asset-thumb {
  flex: none;
  width: 17px;
  height: 17px;
  margin: 1px 4px 0 0;
  display: flex;
  align-items: center;
  justify-content: center;
  background: #565656;
}

.asset-thumb i {
  width: 6px;
  height: 13px;
  border-radius: 50%;
  background: linear-gradient(90deg, #a37a4a 40%, #3a2f2c 60%);
  transform: rotate(8deg);
}

.asset-info {
  flex: 1;
  min-width: 0;
}

.asset-title {
  height: 10px;
  display: flex;
  align-items: center;
  gap: 3px;
  padding-right: 2px;
  color: #8e8e8e;
  font-size: 7px;
}

.asset-title .jp {
  font-size: 6.600px;
  letter-spacing: -.3px;
}

.asset-btns {
  height: 9px;
  margin-top: 3px;
  display: flex;
  justify-content: flex-end;
  gap: 2px;
}

.mini {
  width: 22px;
  height: 8px;
  display: flex;
  align-items: center;
  justify-content: center;
  gap: 4px;
  background: #575757;
}

.mini.open {
  width: 17px;
  color: #bbb;
  font-size: 6px;
}

.asset-variant {
  height: 10px;
  margin-top: 1px;
  display: flex;
  align-items: center;
  color: #6f6f6f;
}

.asset-variant > span {
  flex: none;
  width: 49px;
}

.field {
  flex: 1;
  height: 10px;
  display: flex;
  align-items: center;
  gap: 1px;
  padding: 0 2px;
  background: #2e2e2e;
  border-radius: 1px;
  color: #9a9a9a;
}

.asset-variant .field {
  color: #6f6f6f;
}

.band {
  height: 17px;
  background: #3c3c3c;
  border-top: 1px solid #2c2c2c;
  border-bottom: 1px solid #2c2c2c;
}

.root-note {
  height: 14px;
  display: flex;
  align-items: center;
  padding-left: 2px;
  background: #3c3c3c;
  border-bottom: 1px solid #2c2c2c;
  color: #8d8d8d;
}

.object {
  height: 35px;
  display: flex;
  padding: 5px 3px 0 4px;
  background: #3c3c3c;
}

.obj-icon {
  width: 12px;
  height: 13px;
  margin-top: 1px;
  margin-right: 9px;
}

.obj-rows {
  flex: 1;
  min-width: 0;
}

.obj-name {
  height: 9px;
  display: flex;
  align-items: center;
  gap: 2px;
}

.check {
  flex: none;
  display: block;
  width: 7px;
  height: 7px;
  background: #2c2c2c;
  border-radius: 1px;
}

.check .ic {
  width: 7px;
  height: 7px;
  color: #ddd;
}

.name-field {
  flex: none;
  width: 309px;
  height: 9px;
  display: flex;
  align-items: center;
  padding-left: 2px;
  background: #2e2e2e;
  color: #8b8b8b;
  font-weight: 700;
}

.static {
  color: #777;
  margin-left: 1px;
}

.obj-tags {
  height: 9px;
  margin-top: 4px;
  margin-left: -3px;
  display: flex;
  align-items: center;
}

.tag-label {
  flex: none;
  width: 14px;
  color: #8a8a8a;
}

.layer-label {
  flex: none;
  width: 21px;
  margin-left: 9px;
  color: #8a8a8a;
}

.drop {
  flex: 1;
  height: 8.500px;
  display: flex;
  align-items: center;
  justify-content: space-between;
  padding: 0 3px 0 2px;
  background: #515151;
  border-radius: 1px;
  color: #b5b5b5;
}

.tag-drop {
  flex: none;
  width: 161px;
}

.drop.bold,
.obj-tags .drop {
  font-weight: 600;
}

.comp {
  height: 11px;
  display: flex;
  align-items: center;
  padding-left: 3px;
  background: #3e3e3e;
  border-top: 1px solid #2c2c2c;
  color: #a9a9a9;
}

.comp.tall {
  height: 11.500px;
}

.comp .ic8 {
  margin-left: 3px;
}

.comp .check {
  margin-left: 2px;
}

.comp-name {
  margin-left: 13px;
  font-weight: 600;
}

.comp-name.close {
  margin-left: 3px;
}

.comp-tools {
  margin-left: auto;
  display: flex;
  align-items: center;
  gap: 5px;
  padding-right: 3px;
}

.xform {
  height: 38px;
  padding-top: 2px;
}

.xrow {
  height: 10.600px;
  display: flex;
  align-items: center;
  padding-left: 11px;
  color: #969696;
}

.xlabel {
  flex: none;
  width: 154px;
  display: flex;
  padding-right: 3px;
}

.ax {
  flex: none;
  width: 8px;
  color: #8c8c8c;
}

.num {
  flex: none;
  width: 62px;
  height: 9.500px;
  margin-right: 3px;
  display: flex;
  align-items: center;
  padding-left: 2px;
  background: #2b2b2b;
  color: #a8a8a8;
}

.xrow .num:last-child {
  margin-right: 0;
}

.materials {
  height: 13px;
  display: flex;
  align-items: center;
  padding: 2px 3px 0 3px;
  gap: 3px;
  color: #b0b0b0;
  box-shadow: inset 2px 0 #2b5a85;
}

.count-field {
  width: 25px;
  height: 10px;
  margin-left: auto;
  display: flex;
  align-items: center;
  padding-left: 3px;
  background: #2b2b2b;
  color: #aaa;
}

.element {
  height: 13px;
  margin: 1px 7px 0 11px;
  display: flex;
  align-items: center;
  background: #424242;
  border-radius: 1px;
  color: #8c8c8c;
}

.drag {
  flex: none;
  width: 5px;
  height: 1px;
  margin: 0 5px 0 4px;
  background: #5f5f5f;
}

.el-label {
  flex: none;
  width: 139px;
}

.mat-field {
  margin-right: 0;
  color: #b5b5b5;
  font-weight: 500;
}

.mat-field .ic5 {
  color: #5fa0d0;
}

.plusminus {
  height: 12.700px;
  display: flex;
  justify-content: flex-end;
  padding-right: 8px;
}

.plusminus div {
  width: 30px;
  height: 10px;
  display: flex;
  justify-content: space-around;
  align-items: center;
  background: #404040;
  color: #ccc;
  font-size: 9px;
}

.section {
  height: 10.600px;
  display: flex;
  align-items: center;
  gap: 3px;
  padding-left: 3px;
  color: #b0b0b0;
}

.section b {
  font-weight: 600;
}

.prop {
  height: 10.600px;
  display: grid;
  grid-template-columns: 165px 1fr;
  align-items: center;
  padding-right: 3px;
  color: #9a9a9a;
}

.prop > span:first-child {
  padding-left: 18px;
}

.prop .field {
  height: 10px;
}

.prop.sub > span:first-child {
  padding-left: 26px;
}

.prop.off {
  color: #666;
}

.prop.off .drop,
.drop.dimmed {
  background: #464646;
  color: #6d6d6d;
}

.flagged {
  display: flex;
  align-items: center;
  gap: 6px;
}

.preview-head {
  flex: none;
  height: 12px;
  display: flex;
  align-items: center;
  gap: 3px;
  padding: 0 4px;
  background: #3c3c3c;
  border-bottom: 1px solid #2c2c2c;
  color: #b0b0b0;
}

.rule {
  flex: 1;
  height: 4px;
  border-top: 1px solid #4c4c4c;
  border-bottom: 1px solid #4c4c4c;
}

.preview {
  flex: none;
  height: 58px;
  display: flex;
  align-items: center;
  justify-content: center;
  background: #525252;
}

.bundle-gap {
  flex: none;
  height: 16px;
  display: flex;
  align-items: center;
  justify-content: flex-end;
  padding-right: 4px;
  background: #3c3c3c;
}

.bundle {
  flex: none;
  height: 11px;
  display: flex;
  align-items: center;
  gap: 4px;
  padding: 0 2px;
  background: #3c3c3c;
  color: #8c8c8c;
}

.bundle > span {
  flex: none;
  width: 46px;
}

.main-drop {
  flex: none;
  width: 257px;
}

.side-drop {
  flex: none;
  width: 74px;
}

.statusbar {
  flex: none;
  height: 12px;
  display: flex;
  align-items: center;
  justify-content: flex-end;
  gap: 6px;
  padding-right: 3px;
  background: #191919;
}
```
